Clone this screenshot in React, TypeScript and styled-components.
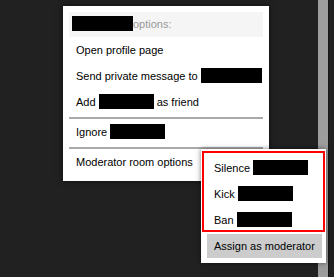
import styled, { createGlobalStyle } from "styled-components";

const GlobalStyle = createGlobalStyle`
  html, body {
    margin: 0;
    padding: 0;
  }
  body {
    background: #212121;
    font-family: "Liberation Sans", Arial, sans-serif;
  }
`;

const Page = styled.div`
  display: flex;
  height: 277px;
  overflow: hidden;
`;

const Stage = styled.div`
  flex: 0 0 318px;
  box-sizing: border-box;
  padding: 6px 0 0 63px;
`;

const ScrollTrack = styled.div`
  flex: 0 0 10px;
  background: #9d9d9d;
  border-right: 1px solid #141414;
`;

const Menu = styled.ul`
  list-style: none;
  margin: 0;
  padding: 6px;
  width: 206px;
  box-sizing: border-box;
  background: #fff;
  box-shadow: 0 0 6px rgba(0, 0, 0, 0.6);
  font-size: 11px;
  color: #000;
`;

const Header = styled.li`
  height: 25px;
  line-height: 25px;
  padding-left: 3px;
  background: #f5f5f5;
  color: #999;
  white-space: nowrap;
`;

const Item = styled.li`
  position: relative;
  height: 26px;
  line-height: 26px;
  padding: 0 7px;
  white-space: nowrap;
  cursor: default;
`;

const Separator = styled.li`
  height: 2px;
  margin: 2px 0 0;
  background: #aaa;
`;

const Redacted = styled.span<{ $w: number }>`
  display: inline-block;
  width: ${({ $w }) => $w}px;
  height: 15px;
  vertical-align: -3px;
  background: #000;
`;

const SubMenu = styled.ul`
  position: absolute;
  left: 132px;
  top: 0;
  z-index: 2;
  list-style: none;
  margin: 0;
  padding: 6px 4px 5px 6px;
  width: 125px;
  box-sizing: border-box;
  background: #fff;
  box-shadow: 0 0 5px rgba(0, 0, 0, 0.5);
`;

const SubButton = styled.li`
  margin-top: 1px;
  height: 24px;
  line-height: 24px;
  padding: 0 7px;
  background: #ccc;
  white-space: nowrap;
`;

const Highlight = styled.div`
  position: absolute;
  left: 1px;
  top: 2px;
  width: 123px;
  height: 81px;
  box-sizing: border-box;
  border: 2px solid #f00;
  pointer-events: none;
`;

export default function App() {
  return (
    <>
      <GlobalStyle />
      <Page>
        <Stage>
          <Menu>
            <Header>
              <Redacted $w={61} />
              options:
            </Header>
            <Item>Open profile page</Item>
            <Item>
              Send private message to <Redacted $w={61} />
            </Item>
            <Item>
              Add <Redacted $w={55} /> as friend
            </Item>
            <Separator />
            <Item>
              Ignore <Redacted $w={55} />
            </Item>
            <Separator />
            <Item>
              Moderator room options
              <SubMenu>
                <Item>
                  Silence <Redacted $w={55} />
                </Item>
                <Item>
                  Kick <Redacted $w={55} />
                </Item>
                <Item>
                  Ban <Redacted $w={55} />
                </Item>
                <SubButton>Assign as moderator</SubButton>
                <Highlight />
              </SubMenu>
            </Item>
          </Menu>
        </Stage>
        <ScrollTrack />
      </Page>
    </>
  );
}
